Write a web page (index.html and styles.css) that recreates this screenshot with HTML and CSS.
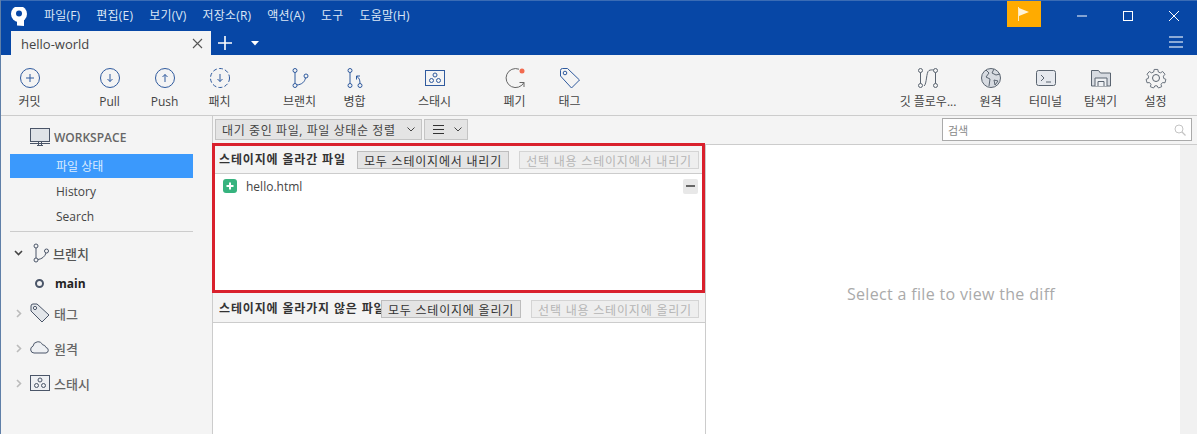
FILE: index.html
```html
<!DOCTYPE html>
<html lang="ko">
<head>
<meta charset="utf-8">
<title>hello-world</title>
<link rel="stylesheet" href="styles.css">
</head>
<body>
<div class="app">
  <header class="titlebar">
    <svg class="logo" width="20" height="20" viewBox="0 0 20 20"><circle cx="10" cy="7" r="8" fill="#fff"/><path d="M5 12l3 2v4.500l7 .5v-7z" fill="#fff"/><circle cx="10" cy="6.500" r="3" fill="#0747a6"/></svg>
    <nav class="menu">
      <span>파일(F)</span><span>편집(E)</span><span>보기(V)</span><span>저장소(R)</span><span>액션(A)</span><span>도구</span><span>도움말(H)</span>
    </nav>
    <div class="flag"><svg width="14" height="14" viewBox="0 0 14 14"><path d="M1.500 0v14" stroke="#ffe9b8" stroke-width="1"/><path d="M2 1l10 4-10 4z" fill="#fff3d6"/></svg></div>
    <div class="winbtn"><svg width="12" height="12" viewBox="0 0 12 12"><path d="M1 6h10" stroke="#fff"/></svg></div>
    <div class="winbtn"><svg width="12" height="12" viewBox="0 0 12 12"><rect x="1.500" y="1.500" width="9" height="9" fill="none" stroke="#fff"/></svg></div>
    <div class="winbtn"><svg width="12" height="12" viewBox="0 0 12 12"><path d="M1 1l10 10M11 1L1 11" stroke="#fff"/></svg></div>
  </header>
  <div class="tabbar">
    <div class="tab"><span>hello-world</span><svg width="11" height="11" viewBox="0 0 11 11"><path d="M1 1l9 9M10 1l-9 9" stroke="#555" stroke-width="1.100"/></svg></div>
    <svg class="tab-plus" width="16" height="16" viewBox="0 0 16 16"><path d="M8 1v14M1 8h14" stroke="#fff" stroke-width="1.600"/></svg>
    <svg class="tab-caret" width="8" height="5" viewBox="0 0 8 5"><path d="M0 0h8L4 4.500z" fill="#fff"/></svg>
    <svg class="tab-menu" width="14" height="12" viewBox="0 0 14 12"><path d="M0 1h14M0 6h14M0 11h14" stroke="#b8cbe8" stroke-width="1.400"/></svg>
  </div>
  <div class="toolbar">
    <div class="tool"><svg width="22" height="22" viewBox="0 0 22 22"><circle cx="11" cy="11" r="9.500" class="blue"/><path d="M11 7v8M7 11h8" class="blue"/></svg><span>커밋</span></div>
    <div class="tool gap"><svg width="22" height="22" viewBox="0 0 22 22"><circle cx="11" cy="11" r="9.500" class="blue"/><path d="M11 7v7.500M8.500 12l2.500 2.500 2.500-2.500" class="blue"/></svg><span>Pull</span></div>
    <div class="tool"><svg width="22" height="22" viewBox="0 0 22 22"><circle cx="11" cy="11" r="9.500" class="blue"/><path d="M11 15V7.500M8.500 10L11 7.500 13.500 10" class="blue"/></svg><span>Push</span></div>
    <div class="tool"><svg width="22" height="22" viewBox="0 0 22 22"><circle cx="11" cy="11" r="9.500" class="blue" stroke-dasharray="4 2.200"/><path d="M11 7v7.500M8.500 12l2.500 2.500 2.500-2.500" class="blue"/></svg><span>패치</span></div>
    <div class="tool gap"><svg width="22" height="22" viewBox="0 0 22 22"><circle cx="6" cy="3.500" r="2" class="blue"/><circle cx="6" cy="18.500" r="2" class="blue"/><circle cx="17" cy="9" r="2" class="blue"/><path d="M6 5.500v11M7.800 18c5-.5 8-3 8.700-7.200" class="blue"/></svg><span>브랜치</span></div>
    <div class="tool"><svg width="22" height="22" viewBox="0 0 22 22"><circle cx="6" cy="3.500" r="2" class="blue"/><circle cx="6" cy="18.500" r="2" class="blue"/><circle cx="16" cy="18.500" r="2" class="blue"/><path d="M6 5.500v11M16 16.500c0-4-1-5.500-3-7M12.500 12.500v-3.500h3.500" class="blue"/></svg><span>병합</span></div>
    <div class="tool gap"><svg width="22" height="22" viewBox="0 0 22 22"><rect x="1.500" y="3.500" width="19" height="15" class="blue"/><circle cx="11" cy="8" r="2" class="blue"/><circle cx="7.500" cy="13.500" r="2" class="blue"/><circle cx="14.500" cy="13.500" r="2" class="blue"/></svg><span>스태시</span></div>
    <div class="tool gap"><svg width="22" height="22" viewBox="0 0 22 22"><path d="M15 2.200A9.500 9.500 0 1 0 20 15.500" fill="none" stroke="#666"/><path d="M20 20v-4.500h-4.500" fill="none" stroke="#666"/><circle cx="18" cy="4" r="2.500" fill="#f26a4f"/></svg><span>폐기</span></div>
    <div class="tool"><svg width="22" height="22" viewBox="0 0 22 22"><path d="M1.500 3.500a2 2 0 0 1 2-2h5l12 11.500-8 8L1.500 9z" class="blue"/><circle cx="6" cy="6" r="1.800" class="blue"/></svg><span>태그</span></div>
    <div class="tool-spacer"></div>
    <div class="tool flow"><svg width="22" height="22" viewBox="0 0 22 22"><circle cx="3.500" cy="3.500" r="2" class="gray"/><circle cx="3.500" cy="18.500" r="2" class="gray"/><circle cx="18.500" cy="3.500" r="2" class="gray"/><circle cx="18.500" cy="18.500" r="2" class="gray"/><path d="M3.500 5.500v11M18.500 5.500v11M7 19c3-2 2-14 5-15.500 1.500-.7 3-.7 4.500-.5" class="gray"/></svg><span>깃 플로우...</span></div>
    <div class="tool"><svg width="22" height="22" viewBox="0 0 22 22"><circle cx="11" cy="11" r="9.500" fill="#d7dbe1" stroke="#5a6470"/><path d="M6 3l3 3-3 4 4 2-1 7M14 2l-2 4 4 2 4-1M14 13l4 1-3 4z" class="gray"/></svg><span>원격</span></div>
    <div class="tool"><svg width="22" height="22" viewBox="0 0 22 22"><rect x="1.500" y="3.500" width="19" height="15" rx="2" fill="#e6e9ee" stroke="#5a6470"/><path d="M6 8l3 3-3 3M11 15h5" class="gray"/></svg><span>터미널</span></div>
    <div class="tool"><svg width="22" height="22" viewBox="0 0 22 22"><path d="M1.500 19V3.500h7l2 2.500h10v13z" fill="#d7dbe1" stroke="#5a6470"/><path d="M5 19v-8h12v8M8 19v-4.500h6V19" fill="#eef0f3" stroke="#5a6470"/></svg><span>탐색기</span></div>
    <div class="tool"><svg width="22" height="22" viewBox="0 0 22 22"><path d="M9 1.500h4l.6 2.800 2.300 1 2.500-1.500 2.600 3-1.800 2.200.4 2.500 2.400 1-1 3.800-2.800-.2-1.600 1.900.7 2.700-3.600 1.400-1.500-2.400h-2.400l-1.500 2.400-3.600-1.400.7-2.700-1.600-1.900-2.800.2-1-3.800 2.400-1 .4-2.500-1.800-2.200 2.600-3 2.500 1.500 2.300-1z" class="gray" transform="translate(1.100 1.100) scale(.9)"/><circle cx="11" cy="11" r="3.500" class="gray"/></svg><span>설정</span></div>
  </div>
  <div class="body">
    <aside class="sidebar">
      <div class="ws-head"><svg width="20" height="18" viewBox="0 0 20 18"><rect x=".5" y=".5" width="19" height="13" fill="#dfe3e8" stroke="#4a5568"/><path d="M0 15.500h20M7 17.500h6M8.500 14v3M11.500 14v3" stroke="#4a5568"/></svg><span>WORKSPACE</span></div>
      <div class="side-row selected">파일 상태</div>
      <div class="side-row">History</div>
      <div class="side-row">Search</div>
      <div class="side-div"></div>
      <div class="group first"><svg class="chev" width="9" height="6" viewBox="0 0 9 6"><path d="M1 1l3.500 3.500L8 1" fill="none" stroke="#444" stroke-width="1.600"/></svg><svg width="18" height="20" viewBox="0 0 18 20"><circle cx="4" cy="3" r="2" class="navy"/><circle cx="4" cy="17" r="2" class="navy"/><circle cx="14.500" cy="8" r="2" class="navy"/><path d="M4 5v10M6 16.500c4-.5 7-3 8-6.500" class="navy"/></svg><span>브랜치</span></div>
      <div class="branch"><i class="ring"></i><b>main</b></div>
      <div class="group tag"><svg class="chev closed" width="6" height="9" viewBox="0 0 6 9"><path d="M1 1l3.500 3.500L1 8" fill="none" stroke="#bbb" stroke-width="1.600"/></svg><svg width="20" height="20" viewBox="0 0 20 20"><path d="M1 3a2 2 0 0 1 2-2h4l12 11-7 7L1 8z" fill="#e3e6ea" stroke="#4a5568"/><circle cx="5" cy="5" r="1.600" fill="#fff" stroke="#4a5568"/></svg><span>태그</span></div>
      <div class="group"><svg class="chev closed" width="6" height="9" viewBox="0 0 6 9"><path d="M1 1l3.500 3.500L1 8" fill="none" stroke="#bbb" stroke-width="1.600"/></svg><svg width="20" height="20" viewBox="0 0 20 20"><path d="M4 15a3.500 3.500 0 0 1-1-6.800 5 5 0 0 1 9.500-1.500 4 4 0 0 1 3.500 2.800A2.800 2.800 0 0 1 16 15z" fill="#eef0f3" stroke="#4a5568"/></svg><span>원격</span></div>
      <div class="group"><svg class="chev closed" width="6" height="9" viewBox="0 0 6 9"><path d="M1 1l3.500 3.500L1 8" fill="none" stroke="#bbb" stroke-width="1.600"/></svg><svg width="20" height="16" viewBox="0 0 20 16"><rect x=".5" y=".5" width="19" height="15" fill="#eef0f3" stroke="#4a5568"/><circle cx="10" cy="5" r="2" class="navy"/><circle cx="6.500" cy="10.500" r="2" class="navy"/><circle cx="13.500" cy="10.500" r="2" class="navy"/></svg><span>스태시</span></div>
    </aside>
    <main class="content">
      <div class="filterbar">
        <div class="combo wide">대기 중인 파일, 파일 상태순 정렬<svg width="8" height="5" viewBox="0 0 8 5"><path d="M.5.5L4 4 7.500.5" fill="none" stroke="#444"/></svg></div>
        <div class="combo narrow"><svg width="11" height="9" viewBox="0 0 11 9"><path d="M0 .5h11M0 4.500h11M0 8.500h11" stroke="#333"/></svg><svg width="8" height="5" viewBox="0 0 8 5"><path d="M.5.5L4 4 7.500.5" fill="none" stroke="#444"/></svg></div>
        <div class="search"><span>검색</span><svg width="12" height="12" viewBox="0 0 12 12"><circle cx="5" cy="5" r="4" fill="none" stroke="#c4c4c4"/><path d="M8 8l3.500 3.500" stroke="#c4c4c4" stroke-width="1.300"/></svg></div>
      </div>
      <div class="split">
        <section class="files">
          <div class="staged">
            <div class="pane-head">
              <div class="pane-title">스테이지에 올라간 파일</div>
              <button class="btn staged-all">모두 스테이지에서 내리기</button>
              <button class="btn off staged-sel">선택 내용 스테이지에서 내리기</button>
            </div>
            <div class="list">
              <div class="file">
                <svg width="14" height="14" viewBox="0 0 14 14"><rect width="14" height="14" rx="3" fill="#36b37e"/><path d="M7 3.500v7M3.500 7h7" stroke="#fff" stroke-width="2"/></svg>
                <span>hello.html</span>
                <i class="minus"></i>
              </div>
            </div>
          </div>
          <div class="unstaged">
            <div class="pane-head second">
              <div class="pane-title">스테이지에 올라가지 않은 파일</div>
              <button class="btn unstaged-all">모두 스테이지에 올리기</button>
              <button class="btn off unstaged-sel">선택 내용 스테이지에 올리기</button>
            </div>
            <div class="list"></div>
          </div>
        </section>
        <section class="diff">
          <div class="diff-msg">Select a file to view the diff</div>
          <div class="scroll"></div>
        </section>
      </div>
    </main>
  </div>
</div>
</body>
</html>
```
FILE: styles.css
```css
* { box-sizing: border-box; }
html, body { margin: 0; height: 100%; overflow: hidden; }
body { font-family: "Open Sans", "Noto Sans CJK KR", sans-serif; font-size: 12px; color: #333; background: #f4f4f4; }
.app { width: 1197px; height: 434px; display: flex; flex-direction: column; border-left: 1px solid #5f7fa8; }
.blue { fill: none; stroke: #2f5a9e; stroke-width: 1; }
.gray { fill: none; stroke: #5a6470; stroke-width: 1; }
.navy { fill: none; stroke: #4a5568; stroke-width: 1; }

.titlebar { height: 31px; background: #0747a6; border-top: 1px solid #3a6cb5; display: flex; align-items: flex-start; color: #dbe6f5; }
.logo { margin: 6px 0 0 8px; flex: none; }
.menu { display: flex; gap: 16px; margin: 6px 0 0 15px; line-height: 17px; flex: 1; letter-spacing: .2px; }
.flag { width: 34px; height: 26px; background: #ffab00; display: flex; align-items: center; justify-content: center; margin-right: 18px; }
.winbtn { width: 46px; height: 30px; display: flex; align-items: center; justify-content: center; }
.winbtn:last-child { margin-right: 0; }

.tabbar { height: 24px; background: #0747a6; display: flex; align-items: center; padding-left: 10px; }
.tab { width: 200px; height: 24px; background: #f4f4f4; display: flex; align-items: center; justify-content: space-between; padding: 1px 8px 0 10px; font-size: 13px; color: #444; }
.tab-plus { margin-left: 6px; }
.tab-caret { margin-left: 18px; }
.tab-menu { margin-left: auto; margin-right: 14px; margin-bottom: 2px; }

.toolbar { height: 61px; display: flex; padding: 12px 0 0 1px; border-bottom: 1px solid #ccc; flex: none; }
.tool { width: 55px; display: flex; flex-direction: column; align-items: center; gap: 5px; color: #444; line-height: 16px; }
.tool svg { flex: none; }
.tool span { white-space: nowrap; }
.gap { margin-left: 25px; }
.tool-spacer { flex: 1; }
.flow { width: 70px; }
.tool:last-child { margin-right: 14px; }

.body { flex: 1; display: flex; min-height: 0; }
.sidebar { width: 212px; flex: none; border-right: 1px solid #ccc; padding: 11px 0 0 9px; color: #444; }
.ws-head { display: flex; align-items: center; gap: 4px; margin-left: 20px; height: 20px; color: #666; font-weight: 600; }
.side-row { width: 183px; height: 25px; line-height: 27px; padding-left: 46px; }
.ws-head + .side-row { margin-top: 7px; }
.selected { background: #3b99fc; color: #dcecff; height: 24px; line-height: 25px; }
.side-div { width: 183px; height: 1px; background: #ccc; margin-top: 3px; }
.group { display: flex; align-items: center; height: 22px; margin-top: 13px; color: #666; font-size: 13px; font-weight: 500; }
.group.first { margin-top: 10px; color: #555; }
.group.tag { margin-top: 9px; }
.chev { margin: 0 9px 0 4px; width: 9px; }
.chev.closed { margin: 0 7px 0 5px; width: 8px; }
.group span { margin-left: 4px; }
.first span { margin-left: 3px; }
.branch { display: flex; align-items: center; height: 20px; margin-top: 9px; padding-left: 25px; color: #222; }
.ring { width: 9px; height: 9px; border: 2px solid #4a5568; border-radius: 50%; margin-right: 11px; }
.branch b { font-weight: 700; }

.content { flex: 1; display: flex; flex-direction: column; min-width: 0; }
.filterbar { height: 29px; display: flex; align-items: center; padding: 0 5px 1px 2px; border-bottom: 1px solid #ccc; flex: none; gap: 2px; }
.combo { height: 21px; background: #e4e4e4; border: 1px solid #c4c4c4; display: flex; align-items: center; justify-content: space-between; padding: 0 6px; color: #444; }
.wide { width: 207px; letter-spacing: .6px; white-space: nowrap; }
.narrow { width: 44px; padding: 0 5px 0 8px; }
.search { margin-left: auto; width: 250px; height: 23px; background: #fff; border: 1px solid #aaa; display: flex; align-items: center; justify-content: space-between; padding: 0 5px; color: #888; font-size: 11px; }

.split { flex: 1; display: flex; min-height: 0; }
.files { width: 493px; flex: none; display: flex; flex-direction: column; border-right: 1px solid #ccc; }
.staged { height: 148px; display: flex; flex-direction: column; position: relative; }
.staged::after { content: ""; position: absolute; inset: -2px 0 0 -1px; border: 3px solid #d9202c; pointer-events: none; }
.unstaged { flex: 1; display: flex; flex-direction: column; }
.pane-head { height: 29px; display: flex; align-items: center; border-bottom: 1px solid #ccc; padding: 2px 6px 0 6px; flex: none; }
.pane-head.second { height: 30px; padding-top: 3px; }
.pane-title { flex: 1; min-width: 0; white-space: nowrap; overflow: hidden; font-weight: 700; color: #333; letter-spacing: .85px; margin-bottom: 2px; }
.btn { font: inherit; height: 18px; padding: 0; background: #e4e4e4; border: 1px solid #bdbdbd; color: #333; letter-spacing: .8px; white-space: nowrap; flex: none; }
.btn.off { color: #b5b5b5; background: #eee; border-color: #d4d4d4; margin-left: 10px; }
.staged-all { width: 152px; }
.staged-sel { width: 180px; }
.unstaged-all { width: 140px; }
.unstaged-sel { width: 168px; }
.list { flex: 1; background: #fff; }
.file { display: flex; align-items: center; gap: 9px; height: 20px; margin-top: 2px; padding: 0 7px 0 10px; }
.file span { flex: 1; color: #444; }
.minus { width: 15px; height: 15px; background: #e8e8e8; border-radius: 2px; position: relative; }
.minus::before { content: ""; position: absolute; left: 3px; right: 3px; top: 6.500px; height: 2px; background: #666; }

.diff { flex: 1; background: #fff; display: flex; min-width: 0; }
.diff-msg { flex: 1; display: flex; align-items: center; justify-content: center; color: #aaa; font-size: 16px; letter-spacing: .33px; padding: 8px 0 0 16px; }
.scroll { width: 17px; background: #f1f1f1; flex: none; }
```
